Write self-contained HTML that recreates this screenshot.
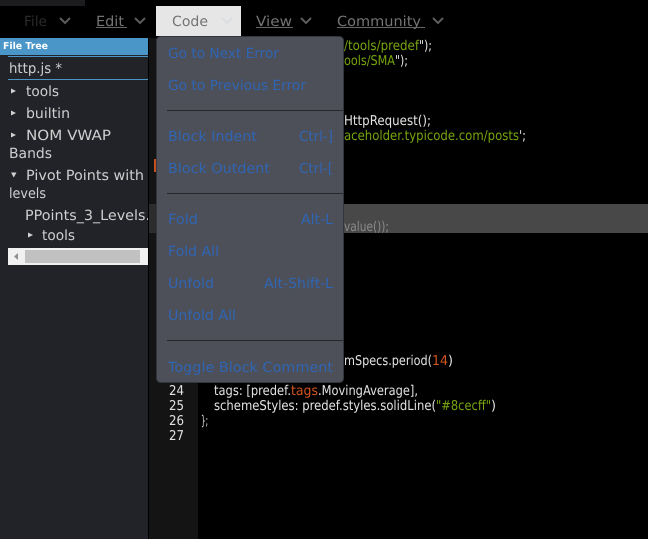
<!DOCTYPE html>
<html><head><meta charset="utf-8"><style>
html,body{margin:0;padding:0;background:#000;width:648px;height:539px;overflow:hidden}
svg{display:block}
text{font-family:"DejaVu Sans","Liberation Sans",sans-serif;font-size:14px;white-space:pre;text-rendering:geometricPrecision}
.m{fill:#3065b4}.s{fill:#cfcfcf}.c{fill:#e2e2e2;font-size:13.500px}.g{fill:#77a50f;font-size:13.500px}.o{fill:#d2541e;font-size:13.500px}
</style></head><body>
<svg width="648" height="539" viewBox="0 0 648 539" xmlns="http://www.w3.org/2000/svg">
<rect width="648" height="539" fill="#000"/>
<rect width="85" height="6" fill="#1c1c1e"/>
<!-- Menu bar -->
<rect x="156" y="6" width="85" height="30" fill="#e6e6e6"/>
<text x="24" y="26" fill="#2a2a2a" textLength="23" lengthAdjust="spacingAndGlyphs">File</text>
<text x="96" y="26" fill="#747474" textLength="28" lengthAdjust="spacingAndGlyphs">Edit</text>
<text x="172" y="26" fill="#747474" textLength="36" lengthAdjust="spacingAndGlyphs">Code</text>
<text x="256" y="26" fill="#747474" textLength="36" lengthAdjust="spacingAndGlyphs">View</text>
<text x="337" y="26" fill="#747474" textLength="84" lengthAdjust="spacingAndGlyphs">Community</text>
<g fill="#666"><rect x="96" y="27" width="31" height="1"/><rect x="256" y="27" width="37" height="1"/><rect x="337" y="27" width="88" height="1"/></g>
<g fill="none" stroke-width="2">
<path d="M60 18l5 5 5-5" stroke="#5c5c5c"/><path d="M135 18l5 5 5-5" stroke="#5c5c5c"/><path d="M222 18l5 5 5-5" stroke="#dadfe2"/><path d="M301 18l5 5 5-5" stroke="#5c5c5c"/><path d="M433 18l5 5 5-5" stroke="#5c5c5c"/>
</g>
<!-- Sidebar -->
<rect x="0" y="38" width="148" height="501" fill="#212329"/>
<rect x="0" y="38" width="148" height="17" fill="#4a96c8"/>
<text x="3" y="49" fill="#fff" font-weight="bold" style="font-size:9.500px" textLength="45" lengthAdjust="spacingAndGlyphs">File Tree</text>
<rect x="8" y="56" width="140" height="1" fill="#4a96c8"/>
<rect x="8" y="79" width="140" height="1" fill="#4a96c8"/>
<text class="s" x="9" y="73" textLength="53" lengthAdjust="spacingAndGlyphs">http.js *</text>
<text class="s" x="26" y="96" textLength="33" lengthAdjust="spacingAndGlyphs">tools</text>
<text class="s" x="26" y="118" textLength="44" lengthAdjust="spacingAndGlyphs">builtin</text>
<text class="s" x="26" y="140" textLength="85" lengthAdjust="spacingAndGlyphs">NOM VWAP</text>
<text class="s" x="9" y="158" textLength="43" lengthAdjust="spacingAndGlyphs">Bands</text>
<text class="s" x="26" y="180" textLength="118" lengthAdjust="spacingAndGlyphs">Pivot Points with</text>
<text class="s" x="9" y="198" textLength="37" lengthAdjust="spacingAndGlyphs">levels</text>
<text class="s" x="25" y="220" textLength="125" lengthAdjust="spacingAndGlyphs">PPoints_3_Levels.</text>
<text class="s" x="42" y="240" textLength="33" lengthAdjust="spacingAndGlyphs">tools</text>
<g fill="#d0d0d0">
<path d="M11 88.500l5 2.500-5 2.500z"/><path d="M11 110.500l5 2.500-5 2.500z"/><path d="M11 132.500l5 2.500-5 2.500z"/>
<path d="M11 172.500h5.500l-2.750 5z"/><path d="M28 232.500l5 2.500-5 2.500z"/>
</g>
<rect x="8" y="248" width="140" height="17" fill="#f1f1f1"/>
<rect x="25" y="250" width="115" height="13" fill="#c1c1c1"/>
<path d="M14 256.500l4-3.500v7z" fill="#8f8f8f"/>
<!-- Gutter -->
<rect x="148" y="38" width="1" height="501" fill="#000"/>
<rect x="149" y="38" width="49" height="501" fill="#141414"/>
<rect x="149" y="204" width="49" height="29" fill="#2c2c2c"/>
<rect x="154" y="159" width="3" height="13" fill="#c8501e"/>
<text class="c" x="169" y="395" textLength="15" lengthAdjust="spacingAndGlyphs">24</text>
<text class="c" x="169" y="410" textLength="15" lengthAdjust="spacingAndGlyphs">25</text>
<text class="c" x="169" y="425" textLength="15" lengthAdjust="spacingAndGlyphs">26</text>
<text class="c" x="169" y="440" textLength="15" lengthAdjust="spacingAndGlyphs">27</text>
<!-- Code -->
<rect x="198" y="204" width="450" height="29" fill="#484848"/>
<text class="g" x="344" y="50" textLength="75" lengthAdjust="spacingAndGlyphs">/tools/predef</text>
<text class="c" x="419" y="50" textLength="13" lengthAdjust="spacingAndGlyphs">");</text>
<text class="g" x="344" y="65" textLength="51" lengthAdjust="spacingAndGlyphs">ools/SMA</text>
<text class="c" x="395" y="65" textLength="13" lengthAdjust="spacingAndGlyphs">");</text>
<text class="c" x="344" y="125" textLength="87" lengthAdjust="spacingAndGlyphs">HttpRequest();</text>
<text class="g" x="344" y="140" textLength="175" lengthAdjust="spacingAndGlyphs">aceholder.typicode.com/posts</text>
<text class="c" x="519" y="140" textLength="7" lengthAdjust="spacingAndGlyphs">';</text>
<text x="344" y="231" fill="#8c8c8c" style="font-size:13.500px" textLength="45" lengthAdjust="spacingAndGlyphs">value());</text>
<text class="c" x="344" y="365" textLength="88" lengthAdjust="spacingAndGlyphs">mSpecs.period(</text>
<text class="o" x="432" y="365" textLength="16" lengthAdjust="spacingAndGlyphs">14</text>
<text class="c" x="448" y="365" textLength="5" lengthAdjust="spacingAndGlyphs">)</text>
<text class="c" x="214" y="395" textLength="77" lengthAdjust="spacingAndGlyphs">tags: [predef.</text>
<text class="o" x="291" y="395" textLength="27" lengthAdjust="spacingAndGlyphs">tags</text>
<text class="c" x="318" y="395" textLength="100" lengthAdjust="spacingAndGlyphs">.MovingAverage],</text>
<text class="c" x="214" y="410" textLength="222" lengthAdjust="spacingAndGlyphs">schemeStyles: predef.styles.solidLine(</text>
<text class="g" x="436" y="410" textLength="55" lengthAdjust="spacingAndGlyphs">"#8cecff"</text>
<text class="c" x="491" y="410" textLength="5" lengthAdjust="spacingAndGlyphs">)</text>
<text class="c" x="201" y="425" textLength="7" lengthAdjust="spacingAndGlyphs">};</text>
<!-- Dropdown -->
<rect x="156.500" y="36.500" width="187" height="346" rx="4" fill="#4d5058" stroke="#33363c"/>
<g fill="#26282e"><rect x="167" y="110" width="176" height="1"/><rect x="167" y="193" width="176" height="1"/><rect x="167" y="340" width="176" height="1"/></g>
<text class="m" x="168" y="58" textLength="111" lengthAdjust="spacingAndGlyphs">Go to Next Error</text>
<text class="m" x="168" y="90" textLength="138" lengthAdjust="spacingAndGlyphs">Go to Previous Error</text>
<text class="m" x="168" y="141" textLength="89" lengthAdjust="spacingAndGlyphs">Block Indent</text>
<text class="m" x="299" y="141" textLength="34" lengthAdjust="spacingAndGlyphs">Ctrl-]</text>
<text class="m" x="168" y="173" textLength="102" lengthAdjust="spacingAndGlyphs">Block Outdent</text>
<text class="m" x="299" y="173" textLength="34" lengthAdjust="spacingAndGlyphs">Ctrl-[</text>
<text class="m" x="168" y="224" textLength="30" lengthAdjust="spacingAndGlyphs">Fold</text>
<text class="m" x="301" y="224" textLength="32" lengthAdjust="spacingAndGlyphs">Alt-L</text>
<text class="m" x="168" y="256" textLength="51" lengthAdjust="spacingAndGlyphs">Fold All</text>
<text class="m" x="168" y="288" textLength="46" lengthAdjust="spacingAndGlyphs">Unfold</text>
<text class="m" x="264" y="288" textLength="69" lengthAdjust="spacingAndGlyphs">Alt-Shift-L</text>
<text class="m" x="168" y="320" textLength="68" lengthAdjust="spacingAndGlyphs">Unfold All</text>
<text class="m" x="168" y="372" textLength="165" lengthAdjust="spacingAndGlyphs">Toggle Block Comment</text>
</svg>
</body></html>
